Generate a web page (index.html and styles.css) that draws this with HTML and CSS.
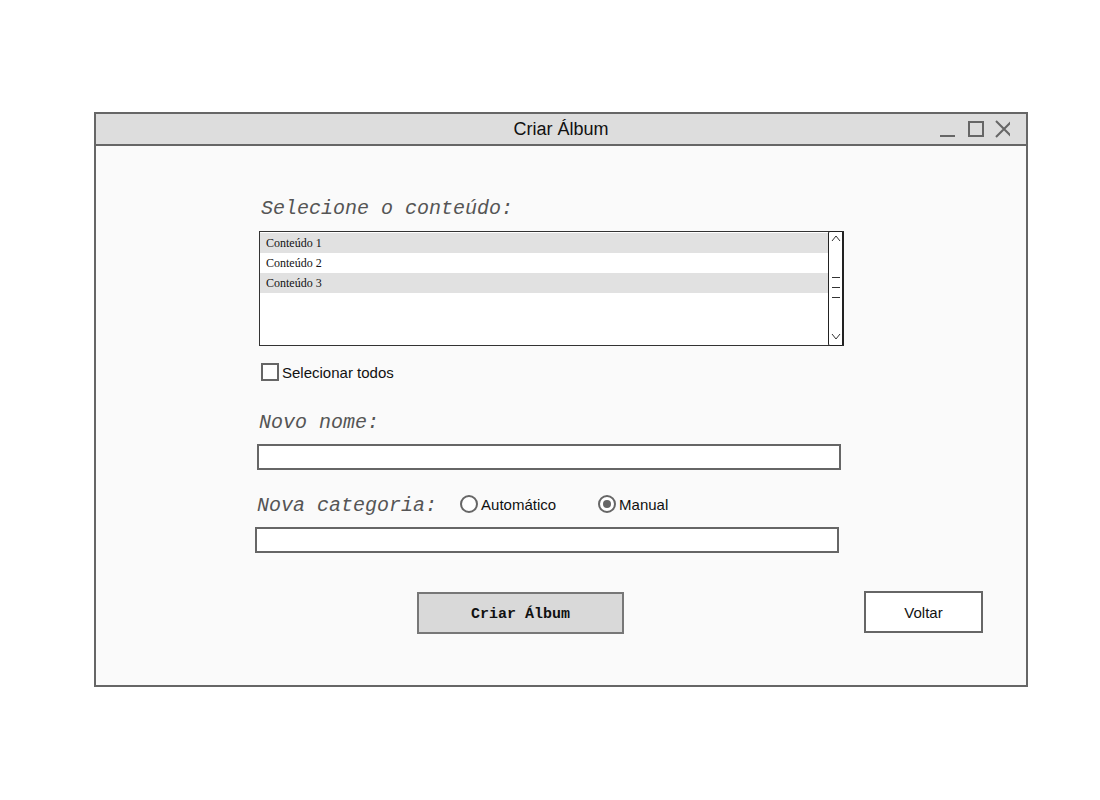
FILE: index.html
```html
<!DOCTYPE html>
<html lang="pt">
<head>
<meta charset="utf-8">
<title>Criar Álbum</title>
<link rel="stylesheet" href="styles.css">
</head>
<body>
<div class="window">
  <div class="titlebar">
    <span class="title">Criar Álbum</span>
    <div class="controls">
      <svg width="80" height="24" viewBox="0 0 80 24">
        <line x1="10" y1="22" x2="25" y2="22" stroke="#666" stroke-width="2"/>
        <rect x="39" y="8" width="14" height="14" fill="none" stroke="#666" stroke-width="2"/>
        <path d="M66 7 L82 23 M82 7 L66 23" stroke="#666" stroke-width="2" fill="none"/>
      </svg>
    </div>
  </div>
  <div class="content">
    <div class="label l1">Selecione o conteúdo:</div>
    <div class="list">
      <div class="items">
        <div class="item alt">Conteúdo 1</div>
        <div class="item">Conteúdo 2</div>
        <div class="item alt">Conteúdo 3</div>
      </div>
      <div class="scrollbar">
        <svg width="14" height="113" viewBox="0 0 14 113">
          <path d="M3 9 L7 4 L11 9" fill="none" stroke="#333" stroke-width="1"/>
          <line x1="3" y1="45.5" x2="11" y2="45.5" stroke="#333" stroke-width="1"/>
          <line x1="3" y1="55.5" x2="11" y2="55.5" stroke="#333" stroke-width="1"/>
          <line x1="3" y1="65.5" x2="11" y2="65.5" stroke="#333" stroke-width="1"/>
          <path d="M3 102 L7 107 L11 102" fill="none" stroke="#333" stroke-width="1"/>
        </svg>
      </div>
    </div>
    <div class="check-row">
      <span class="checkbox"></span>
      <span class="opt-text">Selecionar todos</span>
    </div>
    <div class="label l2">Novo nome:</div>
    <div class="input i1"></div>
    <div class="cat-row">
      <span class="label l3">Nova categoria:</span>
      <span class="radio"></span><span class="opt-text r-auto">Automático</span>
      <span class="radio checked"></span><span class="opt-text">Manual</span>
    </div>
    <div class="input i2"></div>
    <div class="buttons">
      <div class="btn primary">Criar Álbum</div>
      <div class="btn secondary">Voltar</div>
    </div>
  </div>
</div>
</body>
</html>
```
FILE: styles.css
```css
* { box-sizing: border-box; }
html, body { margin: 0; padding: 0; background: #ffffff; }
body { font-family: "Liberation Sans", Arial, sans-serif; }

.window {
  margin: 112px 0 0 94px;
  width: 934px;
  height: 575px;
  border: 2px solid #666;
  background: #fafafa;
  display: flex;
  flex-direction: column;
}

.titlebar {
  height: 32px;
  background: #dddddd;
  border-bottom: 2px solid #666;
  position: relative;
  display: flex;
  align-items: center;
  justify-content: center;
}
.title {
  font-size: 18px;
  color: #111;
  line-height: 30px;
}
.controls {
  position: absolute;
  right: 0;
  top: 0;
  width: 96px;
  height: 30px;
  overflow: hidden;
}
.controls svg { display: block; margin-left: 0; margin-top: 0; }

.content {
  padding-left: 163px;
  display: flex;
  flex-direction: column;
  align-items: flex-start;
}

.label {
  font-family: "Liberation Mono", "Courier New", monospace;
  font-style: italic;
  font-size: 20px;
  line-height: 24px;
  color: #555;
}
.l1 { margin-top: 51px; margin-left: 2px; }

.list {
  margin-top: 10px;
  width: 585px;
  height: 115px;
  border: 1px solid #333;
  background: #fff;
  display: flex;
}
.items { flex: 1; padding-top: 1px; }
.item {
  height: 20px;
  line-height: 20px;
  font-family: "Liberation Serif", "Times New Roman", serif;
  font-size: 12px;
  color: #111;
  padding-left: 6px;
}
.item.alt { background: #e1e1e1; }
.scrollbar {
  width: 16px;
  border: 1px solid #222;
  border-right-width: 2px;
  border-radius: 2px;
  margin: -1px -1px -1px 0;
  background: #fff;
}
.scrollbar svg { display: block; }

.check-row {
  margin-top: 17px;
  margin-left: 2px;
  display: flex;
  align-items: center;
  height: 18px;
}
.checkbox {
  width: 18px;
  height: 18px;
  border: 2px solid #666;
  background: #fff;
  margin-right: 3px;
}
.opt-text {
  font-size: 15px;
  color: #111;
}

.l2 { margin-top: 30px; }

.input {
  height: 26px;
  width: 584px;
  border: 2px solid #666;
  background: #fff;
}
.i1 { margin-top: 9px; margin-left: -2px; }

.cat-row {
  margin-top: 22px;
  margin-left: -2px;
  display: flex;
  align-items: center;
  height: 24px;
}
.l3 { margin-right: 23px; margin-top: 4px; }
.radio {
  width: 18px;
  height: 18px;
  border: 2px solid #666;
  border-radius: 50%;
  background: #fff;
  margin-right: 3px;
  display: flex;
  align-items: center;
  justify-content: center;
}
.radio.checked::after {
  content: "";
  width: 8px;
  height: 8px;
  border-radius: 50%;
  background: #666;
}
.r-auto { margin-right: 42px; }

.i2 { margin-top: 11px; margin-left: -4px; }

.buttons {
  margin-top: 38px;
  display: flex;
  align-items: flex-start;
}
.btn {
  display: flex;
  align-items: center;
  justify-content: center;
  border: 2px solid #666;
}
.primary {
  margin-left: 158px;
  margin-top: 1px;
  width: 207px;
  height: 42px;
  padding-top: 3px;
  background: #d9d9d9;
  border-color: #777;
  font-family: "Liberation Mono", "Courier New", monospace;
  font-weight: bold;
  font-size: 15px;
  color: #111;
}
.secondary {
  margin-left: 240px;
  width: 119px;
  height: 42px;
  background: #fff;
  font-size: 15px;
  color: #111;
}
```
